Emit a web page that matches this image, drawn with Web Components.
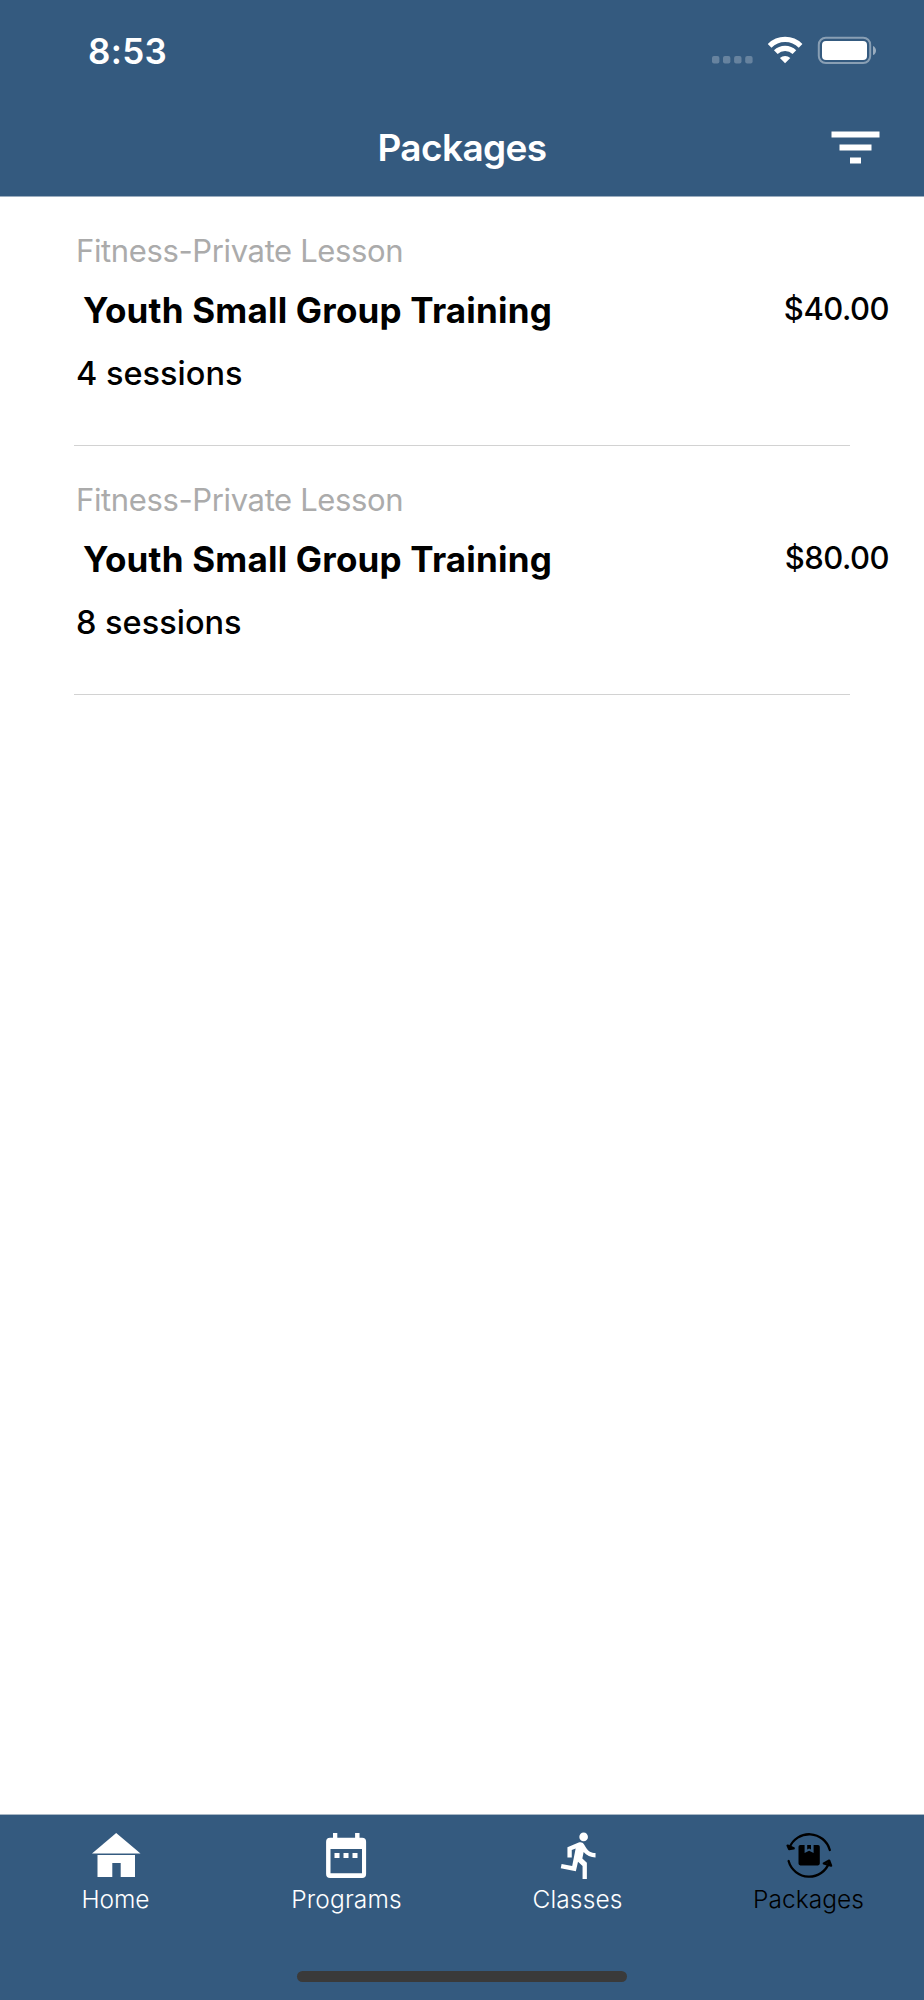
<!DOCTYPE html>
<html lang="en">
<head>
<meta charset="utf-8">
<meta name="viewport" content="width=device-width">
<title>Packages</title>
<style>
  :root {
    --bar-color: #345a7f;
    --page-color: #fff;
    --muted-color: #ababab;
    --line-color: #d2d2d2;
  }

  body {
    margin: 0;
    background: var(--page-color);
    font-family: Inter, "Liberation Sans", sans-serif;
    color: #000;
  }
</style>
</head>
<body>
<app-screen>
  <status-bar slot="header" time="8:53"></status-bar>
  <nav-header slot="header">Packages</nav-header>

  <package-item>
    <span slot="category">Fitness-Private Lesson</span>
    <span slot="name">Youth Small Group Training</span>
    <span slot="price">$40.00</span>
    <span slot="sessions">4 sessions</span>
  </package-item>
  <package-item>
    <span slot="category">Fitness-Private Lesson</span>
    <span slot="name">Youth Small Group Training</span>
    <span slot="price">$80.00</span>
    <span slot="sessions">8 sessions</span>
  </package-item>

  <tab-bar slot="footer">
    <tab-item icon="home" style="--label-spacing: -0.1px">Home</tab-item>
    <tab-item icon="calendar">Programs</tab-item>
    <tab-item icon="run">Classes</tab-item>
    <tab-item icon="package" active style="--label-spacing: 0.05px">Packages</tab-item>
  </tab-bar>
</app-screen>

<script>
class AppScreen extends HTMLElement {
  constructor() {
    super();
    const shadowRoot = this.attachShadow({ mode: "open" });
    shadowRoot.innerHTML = `
      <style>
      :host {
        display: flex;
        flex-direction: column;
        height: 2000px;
      }
      header {
        flex: none;
        height: 196px;
        background: var(--bar-color);
        border-bottom: 1px solid #9badbf;
      }
      main {
        flex: 1;
      }
      </style>
      <header><slot name="header"></slot></header>
      <main><slot></slot></main>
      <slot name="footer"></slot>`;
  }
}

class StatusBar extends HTMLElement {
  constructor() {
    super();
    const shadowRoot = this.attachShadow({ mode: "open" });
    shadowRoot.innerHTML = `
      <style>
      :host {
        display: flex;
        justify-content: space-between;
        align-items: center;
        height: 101px;
        padding: 0 46px 0 88px;
        box-sizing: border-box;
        color: #fff;
      }
      .time {
        font-size: 35px;
        font-weight: 560;
        letter-spacing: 0.3px;
      }
      svg {
        display: block;
        margin-bottom: 1px;
      }
      </style>
      <span class="time"></span>
      <svg width="168" height="30" viewBox="0 0 168 30">
        <g fill="#fff" fill-opacity="0.25">
          <rect x="2" y="21" width="7.4" height="7.4" rx="2"/>
          <rect x="13" y="21" width="7.4" height="7.4" rx="2"/>
          <rect x="24.1" y="21" width="7.4" height="7.4" rx="2"/>
          <rect x="35.2" y="21" width="7.4" height="7.4" rx="2"/>
        </g>
        <g fill="none" stroke="#fff" stroke-width="5.2">
          <path d="M59.6 10.8a22 22 0 0 1 31 0"/>
          <path d="M65.8 17.2a13.2 13.2 0 0 1 18.6 0"/>
        </g>
        <path d="M75.1 28.3l-5.2-5.3a7.6 7.6 0 0 1 10.4 0z" fill="#fff"/>
        <rect x="108.8" y="2.7" width="51.4" height="25.4" rx="7" fill="none" stroke="#fff" stroke-opacity="0.42" stroke-width="2"/>
        <rect x="112" y="6" width="45" height="19" rx="4" fill="#fff"/>
        <path d="M163 10.9c4 1.6 4 7.6 0 9.2z" fill="#fff" fill-opacity="0.5"/>
      </svg>`;
    this.time = shadowRoot.querySelector(".time");
  }

  connectedCallback() {
    this.time.textContent = this.getAttribute("time");
  }
}

class NavHeader extends HTMLElement {
  constructor() {
    super();
    const shadowRoot = this.attachShadow({ mode: "open" });
    shadowRoot.innerHTML = `
      <style>
      :host {
        display: grid;
        grid-template-columns: 1fr auto 1fr;
        align-items: center;
        height: 93px;
        padding: 0 44px;
        color: #fff;
      }
      h1 {
        grid-column: 2;
        margin: 0;
        font-size: 37px;
        font-weight: 600;
        letter-spacing: -0.6px;
      }
      svg {
        display: block;
        justify-self: end;
      }
      </style>
      <h1><slot></slot></h1>
      <svg width="49" height="33" viewBox="0 0 49 33" fill="#fff">
        <rect x="0.5" y="0.5" width="48" height="6"/>
        <rect x="8.5" y="13.5" width="32" height="6"/>
        <rect x="19" y="26.5" width="11" height="6"/>
      </svg>`;
  }
}

class PackageItem extends HTMLElement {
  constructor() {
    super();
    const shadowRoot = this.attachShadow({ mode: "open" });
    shadowRoot.innerHTML = `
      <style>
      :host {
        display: block;
        height: 249px;
        padding: 34px 35px 0 76px;
        box-sizing: border-box;
      }
      .category {
        font-size: 31px;
        line-height: 40px;
        letter-spacing: -0.37px;
        color: var(--muted-color);
      }
      .row {
        display: flex;
        justify-content: space-between;
        align-items: flex-start;
        margin-top: 16px;
        line-height: 46px;
      }
      .name {
        padding-left: 7px;
        font-size: 35px;
        font-weight: 700;
        letter-spacing: 0.2px;
      }
      .price {
        margin-top: 1px;
        font-size: 31px;
        line-height: 42px;
        font-weight: 450;
        letter-spacing: -0.5px;
      }
      .sessions {
        margin-top: 20px;
        font-size: 32.5px;
        line-height: 42px;
        font-weight: 450;
      }
      .line {
        height: 1px;
        margin: 50px 39px 0 -2px;
        background: var(--line-color);
      }
      </style>
      <div class="category"><slot name="category"></slot></div>
      <div class="row">
        <div class="name"><slot name="name"></slot></div>
        <div class="price"><slot name="price"></slot></div>
      </div>
      <div class="sessions"><slot name="sessions"></slot></div>
      <div class="line"></div>`;
  }
}

class TabBar extends HTMLElement {
  constructor() {
    super();
    const shadowRoot = this.attachShadow({ mode: "open" });
    shadowRoot.innerHTML = `
      <style>
      :host {
        display: flex;
        flex-direction: column;
        justify-content: space-between;
        align-items: center;
        height: 186px;
        box-sizing: border-box;
        padding-bottom: 18px;
        border-top: 1px solid #a9b8c6;
        background: var(--bar-color);
      }
      nav {
        display: grid;
        grid-template-columns: repeat(4, 1fr);
        width: 100%;
      }
      .indicator {
        width: 330px;
        height: 11px;
        border-radius: 6px;
        background: #3a3a3a;
      }
      </style>
      <nav><slot></slot></nav>
      <div class="indicator"></div>`;
  }
}

const ICONS = {
  home: `
    <path d="M25.2 3L49.5 23.5H1z"/>
    <path d="M6.5 25H44v22H29.7V33h-8.4v14H6.5z"/>`,
  calendar: `
    <path fill-rule="evenodd" d="M11 3h4.3v4.7h17.8V3h4.4v4.7h2.6a4 4 0 0 1 4 4V44a4 4 0 0 1-4 4H8.1a4 4 0 0 1-4-4V11.7a4 4 0 0 1 4-4H11zM8.5 19v24.2H40V19z"/>
    <path d="M12.5 23h5v5h-5zM21.5 23h5v5h-5zM30.5 23h5v5h-5z"/>`,
  run: `
    <path transform="translate(1.5 -0.6) scale(2.16)" d="M13.49 5.48c1.1 0 2-.9 2-2s-.9-2-2-2-2 .9-2 2 .9 2 2 2zm-3.6 13.9l1-4.4 2.1 2v6h2v-7.5l-2.1-2 .6-3c1.3 1.5 3.3 2.5 5.5 2.5v-2c-1.9 0-3.5-1-4.3-2.4l-1-1.6c-.4-.6-1-1-1.7-1-.3 0-.5.1-.8.1l-5.2 2.2v4.7h2v-3.4l1.8-.7-1.6 8.1-4.9-1-.4 2 7 1.4z"/>`,
  package: `
    <g fill="none" stroke="currentColor" stroke-width="2.3" stroke-linecap="round" stroke-linejoin="round">
      <path d="M45.8 20A21.3 21.3 0 0 0 5.4 17.8"/>
      <path d="M4.6 31A21.3 21.3 0 0 0 45.2 32.5"/>
      <path d="M3.6 15.6l1.5 3.4 4.6-.6z" fill="currentColor"/>
      <path d="M39.8 33.4l5.4-2.8 1.9 5z" fill="currentColor" fill-opacity="0.6"/>
    </g>
    <path d="M16.3 15h4.3v7.9l4.5-2.2 4.5 2.2V15H34a1.8 1.8 0 0 1 1.8 1.8v16.8a1.8 1.8 0 0 1-1.8 1.8H16.3a1.8 1.8 0 0 1-1.8-1.8V16.8a1.8 1.8 0 0 1 1.8-1.8z"/>
    <path d="M23.2 15H27v4.4l-1.9-1-1.9 1z"/>`
};

class TabItem extends HTMLElement {
  constructor() {
    super();
    const shadowRoot = this.attachShadow({ mode: "open" });
    shadowRoot.innerHTML = `
      <style>
      :host {
        display: flex;
        flex-direction: column;
        align-items: center;
        padding-top: 15px;
        color: #fff;
      }
      :host([active]) {
        color: #000;
      }
      svg {
        display: block;
        overflow: visible;
        fill: currentColor;
      }
      .label {
        margin-top: 3px;
        font-size: 24.5px;
        line-height: 32px;
        font-weight: 300;
        letter-spacing: var(--label-spacing, 0.15px);
      }
      </style>
      <svg width="50" height="50" viewBox="0 0 50 50"></svg>
      <span class="label"><slot></slot></span>`;
    this.svg = shadowRoot.querySelector("svg");
  }

  connectedCallback() {
    this.svg.innerHTML = ICONS[this.getAttribute("icon")] || "";
  }
}

window.customElements.define("app-screen", AppScreen);
window.customElements.define("status-bar", StatusBar);
window.customElements.define("nav-header", NavHeader);
window.customElements.define("package-item", PackageItem);
window.customElements.define("tab-bar", TabBar);
window.customElements.define("tab-item", TabItem);
</script>
</body>
</html>
